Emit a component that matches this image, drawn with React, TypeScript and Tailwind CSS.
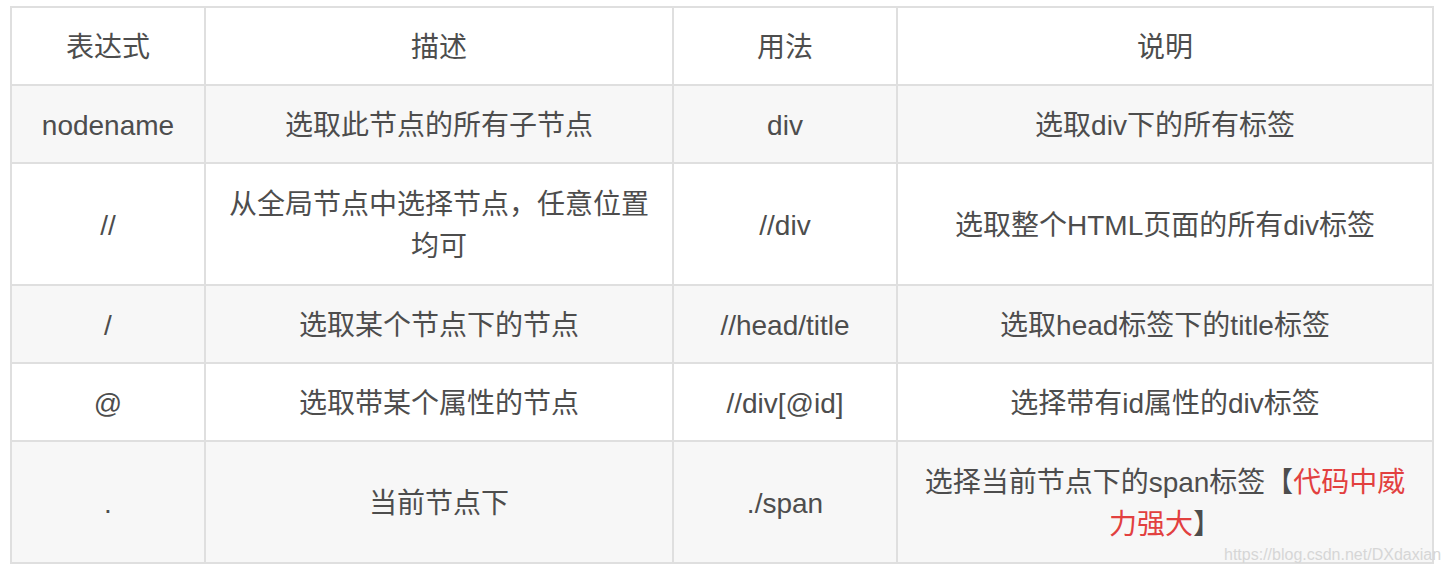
import React from "react";

type Cell = React.ReactNode;

const rows: Cell[][] = [
  ["nodename", "选取此节点的所有子节点", "div", "选取div下的所有标签"],
  ["//", "从全局节点中选择节点，任意位置均可", "//div", "选取整个HTML页面的所有div标签"],
  ["/", "选取某个节点下的节点", "//head/title", "选取head标签下的title标签"],
  ["@", "选取带某个属性的节点", "//div[@id]", "选择带有id属性的div标签"],
  [
    ".",
    "当前节点下",
    "./span",
    <>
      选择当前节点下的span标签【<span className="text-[#e2403f]">代码中威力强大</span>】
    </>,
  ],
];

const header = ["表达式", "描述", "用法", "说明"];

export default function App() {
  const font = {
    fontFamily:
      '"Liberation Sans", "Noto Sans CJK SC", Arial, sans-serif',
  };
  return (
    <div className="relative w-[1448px] h-[574px] bg-white pl-[10px] pt-[6px]" style={font}>
      <div className="grid w-[1424px] grid-cols-[192px_466px_222px_534px] grid-rows-[76px_76px_120px_76px_76px_120px] gap-[2px] bg-[#dfdfdf] p-[2px] text-[28px] leading-[42px] text-[#4d4d4d]">
        {header.map((h, i) => (
          <div key={"h" + i} className="flex items-center justify-center bg-white px-[16px] pt-[4px] text-center">
            {h}
          </div>
        ))}
        {rows.map((r, ri) =>
          r.map((c, ci) => (
            <div
              key={ri + "-" + ci}
              className={
                "flex items-center justify-center px-[16px] pt-[4px] text-center " +
                (ri % 2 === 0 ? "bg-[#f7f7f7]" : "bg-white")
              }
            >
              <div>{c}</div>
            </div>
          ))
        )}
      </div>
      <div className="absolute left-[1224px] top-[545px] text-[16px] leading-[20px] text-[#d6d6d6] whitespace-nowrap">
        https://blog.csdn.net/DXdaxian
      </div>
    </div>
  );
}
